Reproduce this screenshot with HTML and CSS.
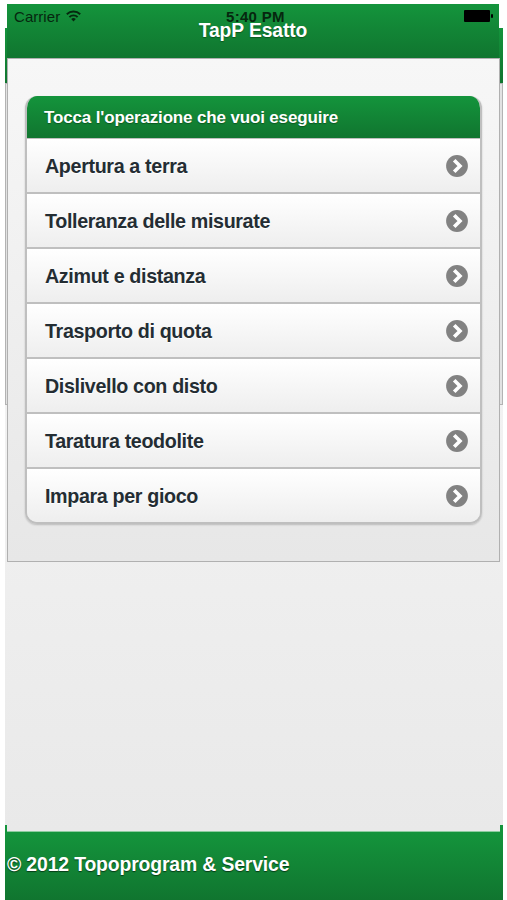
FILE: index.html
```
<!DOCTYPE html>
<html lang="it">
<head>
<meta charset="utf-8">
<title>TapP Esatto</title>
<link rel="stylesheet" href="styles.css">
</head>
<body>
<svg class="defs" width="0" height="0" aria-hidden="true">
  <symbol id="go" viewBox="0 0 22 22">
    <circle cx="11" cy="11" r="10.9" fill="#828282"/>
    <path d="M8.2 5.2L14 11l-5.8 5.8" fill="none" stroke="#fff" stroke-width="3.6"/>
  </symbol>
</svg>
<div class="screen">
  <div class="back">
    <div class="back-header"></div>
    <div class="back-panel"></div>
  </div>
  <main class="page">
    <header class="header">
      <div class="status">
        <span class="carrier">Carrier</span>
        <svg class="wifi" viewBox="0 0 15 12" width="15" height="12"><g fill="none" stroke="#06270f" stroke-width="1.9"><path d="M.8 4.2a9.6 9.6 0 0 1 13.4 0"/><path d="M3.4 7.1a5.8 5.8 0 0 1 8.2 0"/></g><path d="M5.2 9a3.3 3.3 0 0 1 4.6 0L7.5 11.6z" fill="#06270f"/></svg>
        <time class="clock">5:40 PM</time>
        <svg class="battery" viewBox="0 0 29 12" width="29" height="12"><rect width="26" height="12" rx="1"/><rect x="27" y="4" width="2" height="4" rx="1"/></svg>
      </div>
      <h1>TapP Esatto</h1>
    </header>
    <section class="content">
      <ul class="list">
        <li class="divider"><span>Tocca l'operazione che vuoi eseguire</span></li>
        <li><span>Apertura a terra</span><svg class="go"><use href="#go"/></svg></li>
        <li><span>Tolleranza delle misurate</span><svg class="go"><use href="#go"/></svg></li>
        <li><span>Azimut e distanza</span><svg class="go"><use href="#go"/></svg></li>
        <li><span>Trasporto di quota</span><svg class="go"><use href="#go"/></svg></li>
        <li><span>Dislivello con disto</span><svg class="go"><use href="#go"/></svg></li>
        <li><span>Taratura teodolite</span><svg class="go"><use href="#go"/></svg></li>
        <li><span>Impara per gioco</span><svg class="go"><use href="#go"/></svg></li>
      </ul>
    </section>
  </main>
  <footer class="footer"><span>© 2012 Topoprogram &amp; Service</span></footer>
</div>
</body>
</html>
```
FILE: styles.css
```
* { box-sizing: border-box; }
body {
  margin: 0;
  background: #fff;
  font-family: "Liberation Sans", Arial, sans-serif;
  font-weight: bold;
}
.defs { display: block; }
.screen {
  position: relative;
  display: flex;
  flex-direction: column;
  justify-content: space-between;
  width: 498px;
  height: 900px;
  margin-left: 5px;
  padding-top: 4px;
  background: linear-gradient(#fff 0 28px, #f2f2f2 400px, #e9e9e9 830px);
}
.back {
  position: absolute;
  inset: 28px 0 auto;
}
.back-header {
  height: 55px;
  background: linear-gradient(#14943c, #10752f);
}
.back-panel {
  height: 322px;
  border: 1px solid #b3b3b3;
  background: #e2e2e2;
}
.page {
  position: relative;
  width: 493px;
  margin-left: 2px;
}
.header {
  height: 54px;
  width: 492px;
  background: linear-gradient(#14943c, #10752f);
}
.status {
  display: flex;
  align-items: center;
  height: 25px;
  padding: 0 6px 0 7px;
  color: #06270f;
  font-size: 15px;
}
.carrier {
  width: 46px;
  font-weight: normal;
  letter-spacing: 0.05px;
}
.wifi { margin: 0 0 2px 6px; }
.clock {
  margin-left: 145px;
  letter-spacing: 0.3px;
  white-space: nowrap;
}
.battery { margin: 0 0 1px auto; }
h1 {
  margin: -10px 0 0;
  color: #fff;
  font-size: 19.3px;
  letter-spacing: -0.1px;
  line-height: 23px;
  text-align: center;
  text-shadow: 0 1px 1px #0a5820;
}
.content {
  height: 504px;
  padding: 37px 17px 0;
  border: 1px solid #b0b0b0;
  background: linear-gradient(#f7f7f7, #e7e7e7);
}
.list {
  display: flex;
  flex-direction: column;
  margin: 0;
  padding: 0;
  width: 457px;
  height: 428px;
  overflow: hidden;
  list-style: none;
  border: 2px solid #bfbfbf;
  border-top: 0;
  border-radius: 12px;
  box-shadow: 0 1px 2px #0003;
}
.list li {
  display: flex;
  flex: 1;
  align-items: center;
  justify-content: space-between;
  padding: 2px 12px 0 18px;
  border-top: 2px solid #bfbfbf;
  background: linear-gradient(#fff, #eee);
  color: #242d33;
  font-size: 19.7px;
  letter-spacing: -0.35px;
  text-shadow: 0 1px 0 #fff;
}
.list .divider {
  flex: 0 0 42px;
  margin: 0 -2px;
  padding: 1px 19px 0;
  border: 0;
  background: linear-gradient(#14943c, #10752f);
  color: #fff;
  font-size: 17px;
  letter-spacing: -0.15px;
  text-shadow: 0 1px 1px #0a5820;
}
.list .divider + li { border-top-width: 1px; }
.go { width: 22px; height: 22px; margin-bottom: 2px; }
.footer {
  position: relative;
  display: flex;
  align-items: center;
  height: 69px;
  padding: 0 0 3px 2px;
  border-top: 1px solid #8dcca0;
  background: linear-gradient(#14943c, #10752f);
  color: #fff;
  font-size: 19.4px;
  letter-spacing: -0.15px;
  text-shadow: 0 1px 1px #063c16;
}
.footer::before,
.footer::after {
  content: "";
  position: absolute;
  top: -7px;
  width: 2px;
  height: 7px;
  background: #14943c;
}
.footer::before { left: 0; }
.footer::after { right: 0; width: 3px; }
```
